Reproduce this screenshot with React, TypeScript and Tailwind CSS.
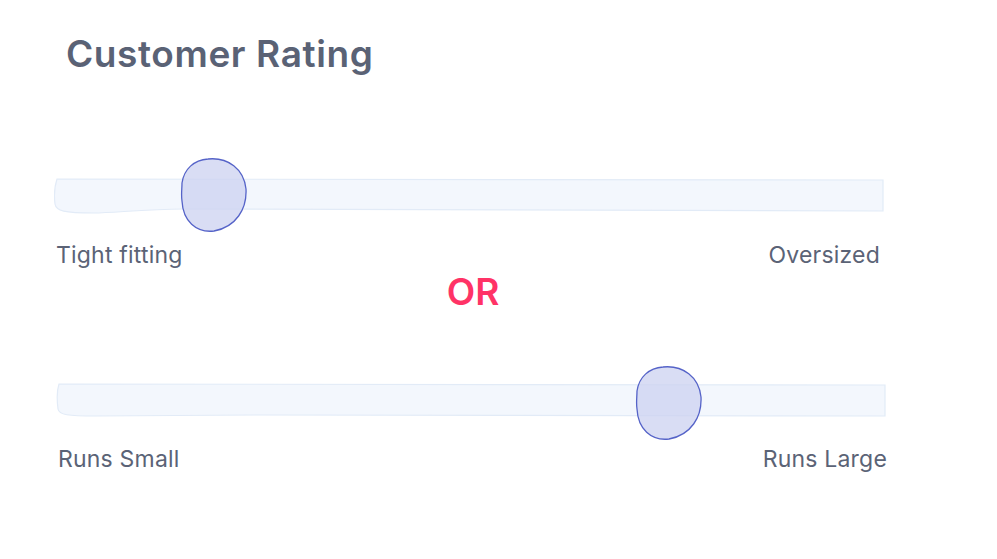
const font = { fontFamily: "Inter, 'Noto Sans', sans-serif" };

type TrackProps = { left: number; top: number; variant: 0 | 1 };

const Track = ({ variant }: { variant: 0 | 1 }) => (
  <svg width="831" height="38" viewBox="0 0 831 38" className="block">
    {variant === 0 ? (
      <path
        d="M3 3 L829 4 L829 35 L130 33 C90 33 60 37 40 37 C10 37 2 35 1 28 C0 20 1 9 3 3 Z"
        fill="#f3f7fd"
        stroke="#e2ebf7"
        strokeWidth="1.2"
      />
    ) : (
      <path
        d="M3 3 L829 4 L829 35 L200 34 L40 35 C12 35 3 34 2 28 C1 20 1 9 3 3 Z"
        fill="#f3f7fd"
        stroke="#e2ebf7"
        strokeWidth="1.2"
      />
    )}
  </svg>
);

const Thumb = () => (
  <svg width="68" height="76" viewBox="0 0 68 76" className="block">
    <path
      d="M28 2 C48 0 64 12 66 32 C67 52 56 70 34 74 C16 76 3 64 2 44 C1 38 2 32 2 26 C4 12 14 3 28 2 Z"
      fill="#ccd1f0"
      fillOpacity="0.75"
      stroke="#5563c8"
      strokeWidth="1.3"
    />
  </svg>
);

const Slider = ({ left, top, variant }: TrackProps) => (
  <div className="relative flex h-[76px] w-[831px] items-center">
    <Track variant={variant} />
    <div className="absolute" style={{ left, top }}>
      <Thumb />
    </div>
  </div>
);

export default function App() {
  return (
    <div className="h-[559px] w-[997px] bg-white pl-[54px] pt-[28px]" style={font}>
      <h1 className="ml-[12px] text-[37px] font-semibold leading-[52px] tracking-[0.6px] text-[#5a6275]">
        Customer Rating
      </h1>
      <div className="mt-[77px]">
        <Slider left={126} top={0} variant={0} />
      </div>
      <div className="mt-[7px] flex w-[826px] justify-between text-[23px] leading-[30px] tracking-[0.2px] text-[#5b6376]">
        <span className="ml-[2px]">Tight fitting</span>
        <span>Oversized</span>
      </div>
      <div className="mt-[2px] flex w-[838px] justify-center text-[37px] font-semibold leading-[40px] text-[#ff3366]">
        OR
      </div>
      <div className="mt-[50px] ml-[2px]">
        <Slider left={579} top={3} variant={1} />
      </div>
      <div className="mt-[6px] flex w-[833px] justify-between text-[23px] leading-[30px] tracking-[0.2px] text-[#5b6376]">
        <span className="ml-[4px]">Runs Small</span>
        <span>Runs Large</span>
      </div>
    </div>
  );
}
